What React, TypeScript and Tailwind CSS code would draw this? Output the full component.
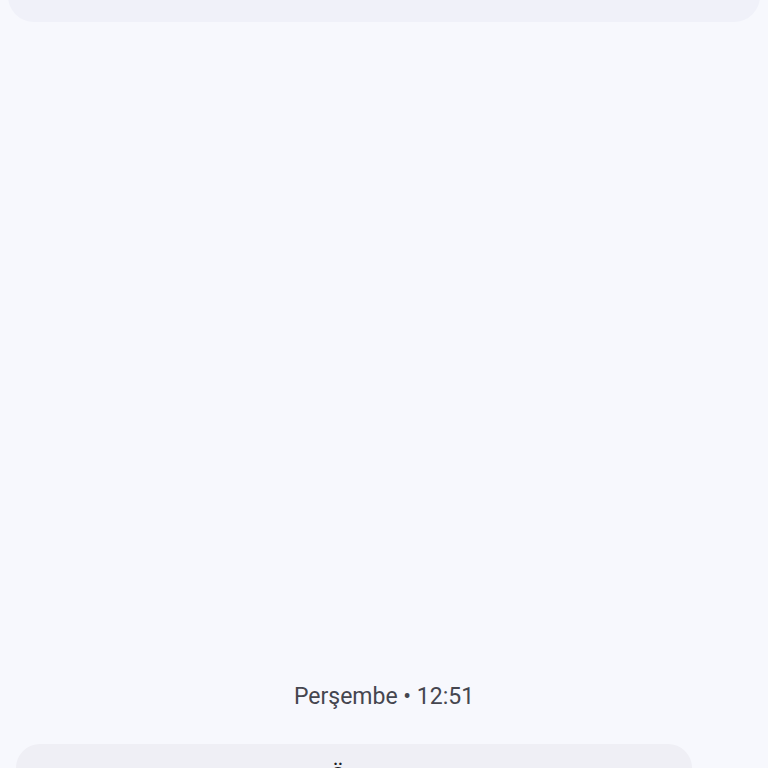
export default function App() {
  return (
    <div
      className="h-[768px] w-full overflow-hidden bg-[#f7f8fd] flex flex-col"
      style={{ fontFamily: 'Roboto, "Noto Sans", sans-serif' }}
    >
      {/* previous card, cut off at top */}
      <div className="mx-2 -mt-[30px] h-[52px] rounded-[26px] bg-[#f0f1f9] shrink-0" />

      <div className="flex-1" />

      {/* timestamp */}
      <div className="text-center text-[23px] leading-[32px] text-[#45464f]">
        Perşembe • 12:51
      </div>

      {/* next message bubble */}
      <div className="mt-[31px] ml-4 w-[676px] h-[24px] shrink-0 overflow-hidden rounded-t-[26px] bg-[#efeff5] pt-[17px] pl-[314px] text-[23px] leading-[32px] text-[#1b1b1f]">
        Ömer
      </div>
    </div>
  )
}
